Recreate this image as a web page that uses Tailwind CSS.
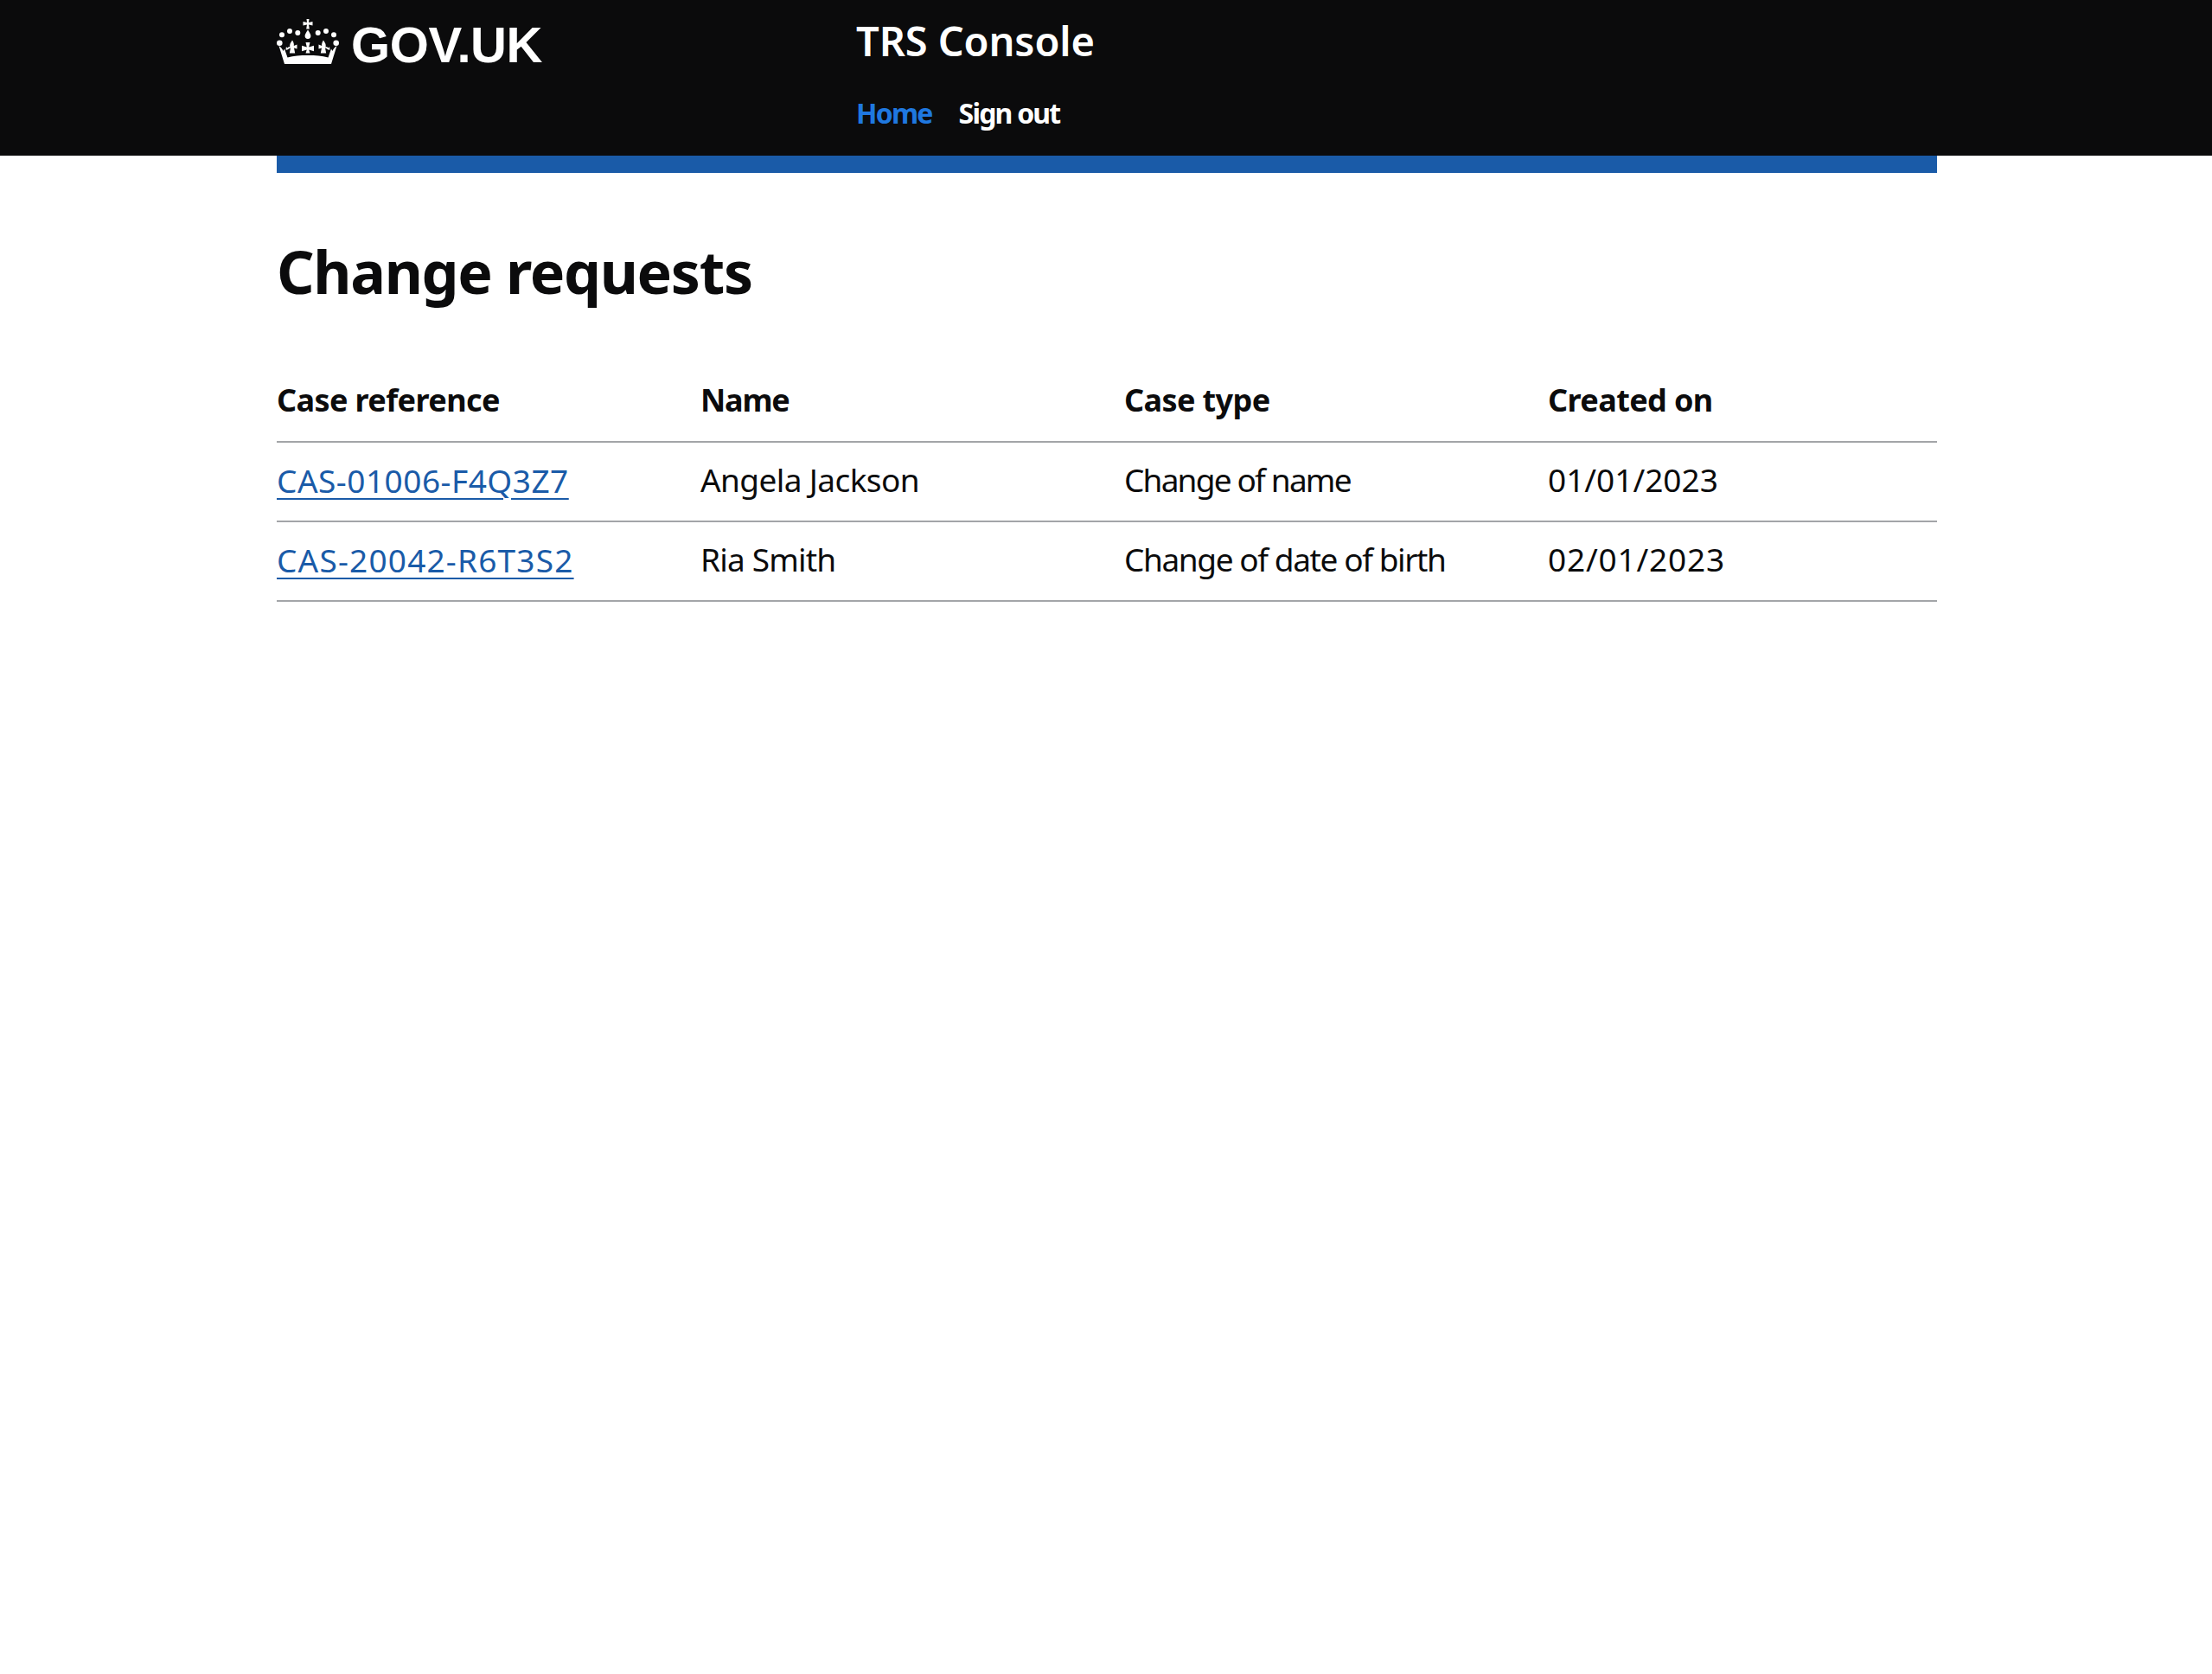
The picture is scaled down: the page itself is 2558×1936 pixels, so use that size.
<!DOCTYPE html>
<html lang="en">
  <head>
    <meta charset="UTF-8">
    <title>Change requests - TRS Console</title>
    <script src="https://cdn.jsdelivr.net/npm/@tailwindcss/browser@4"></script>
  </head>
  <body class="bg-white text-[#0b0b0c] font-['Noto_Sans',sans-serif]">
    <header class="bg-[#0b0b0c] h-[180px]">
      <div class="w-[1920px] ml-[320px] flex">
        <a href="#" class="w-[670px] flex items-start gap-[14px] pt-[22px] text-white">
          <svg class="w-[72px] h-[52px]" viewBox="0 0 72 52" fill="#fff">
            <circle cx="3.3" cy="27.7" r="3.3"/><circle cx="6" cy="18.3" r="3"/><circle cx="15" cy="14" r="3"/><circle cx="24.3" cy="16" r="3"/>
            <circle cx="68.7" cy="27.700" r="3.3"/><circle cx="66" cy="18.3" r="3"/><circle cx="57" cy="14" r="3"/><circle cx="47.7" cy="16" r="3"/>
            <path d="M34.500 0h3l-.5 4 4.500-1v4.600L37 6.600l.8 5h-3.600l.8-5-4.500 1V3l4.500 1z"/>
            <path d="M36 12.500c1.800 3 3.400 5 3.400 7a3.400 3.400 0 0 1-6.800 0c0-2 1.600-4 3.400-7z"/>
            <path d="M18 24.500c1.400 2.200 2.200 4 1.800 6.500l3.700-1.600v5.200L20 33.500l1.200 6h-6.400l1.200-6-1.800.8c-1 1.200-2.400 1.700-3.700 1.300l.4-3.400 1.700 1.200c.7-1 1.500-1.200 2.800-1C14.600 29 16.600 27 18 24.500z"/>
            <path d="M54 24.500c-1.400 2.200-2.200 4-1.800 6.500l-3.700-1.600v5.200l3.500-1.100-1.200 6h6.400l-1.200-6 1.800.8c1 1.200 2.400 1.700 3.700 1.300l-.4-3.400-1.700 1.200c-.7-1-1.500-1.200-2.800-1C57.400 29 55.400 27 54 24.500z"/>
            <path d="M33.500 27h5l-1.300 5.500 5.800-1.700v6.400l-5.800-1.700 1.300 4h-5l1.300-4-5.800 1.700v-6.400l5.800 1.700z"/>
            <path d="M2.500 31c2.500 1.500 4 3.500 5 6L9 34.500l3.500 10c7.500-2 14.500-2.500 23.500-2.500s16 .5 23.500 2.500l3.500-10L64.500 37c1-2.500 2.500-4.500 5-6L63 52H9z"/>
          </svg>
          <span class="font-['Liberation_Sans',sans-serif] font-bold text-[58px] leading-[60px] tracking-[-0.4px]">GOV.UK</span>
        </a>
        <div class="flex flex-col">
          <a href="#" class="text-white font-semibold text-[47px] leading-[60px] mt-[17px] tracking-[-0.1px]">TRS Console</a>
          <nav class="flex gap-[31px] mt-[34px] text-[32px] leading-[40px] font-bold tracking-[-1.800px]">
            <a href="#" class="text-[#1f78e0]">Home</a>
            <a href="#" class="text-white">Sign out</a>
          </nav>
        </div>
      </div>
    </header>
    <main class="w-[1920px] ml-[320px]">
      <div class="h-5 bg-[#1a5ba8]"></div>
      <h1 class="font-bold text-[68px] leading-[80px] mt-[74px] mb-[66px] tracking-[-1.300px]">Change requests</h1>
      <table class="w-full table-fixed text-[37px] leading-[50px]">
        <thead>
          <tr class="border-b-2 border-[#a3a5a8] text-left text-[36px] tracking-[-0.6px]">
            <th class="w-[490px] h-[91px] pb-[4px] font-bold">Case reference</th>
            <th class="w-[490px] pb-[4px] font-bold tracking-[-1.200px]">Name</th>
            <th class="w-[490px] pb-[4px] font-bold">Case type</th>
            <th class="pb-[4px] font-bold">Created on</th>
          </tr>
        </thead>
        <tbody>
          <tr class="border-b-2 border-[#a3a5a8] h-[92px]">
            <td class="pb-[3px] tracking-[0.5px]"><a href="#" class="text-[#1a5ba8] underline underline-offset-[6px] decoration-2">CAS-01006-F4Q3Z7</a></td>
            <td class="pb-[5px] tracking-[-0.6px]">Angela Jackson</td>
            <td class="pb-[5px] tracking-[-1.800px]">Change of name</td>
            <td class="pb-[5px]">01/01/2023</td>
          </tr>
          <tr class="border-b-2 border-[#a3a5a8] h-[92px]">
            <td class="pb-[3px] tracking-[1.200px]"><a href="#" class="text-[#1a5ba8] underline underline-offset-[6px] decoration-2">CAS-20042-R6T3S2</a></td>
            <td class="pb-[5px] tracking-[-0.8px]">Ria Smith</td>
            <td class="pb-[5px] tracking-[-1.400px]">Change of date of birth</td>
            <td class="pb-[5px] tracking-[0.8px]">02/01/2023</td>
          </tr>
        </tbody>
      </table>
    </main>
  </body>
</html>
